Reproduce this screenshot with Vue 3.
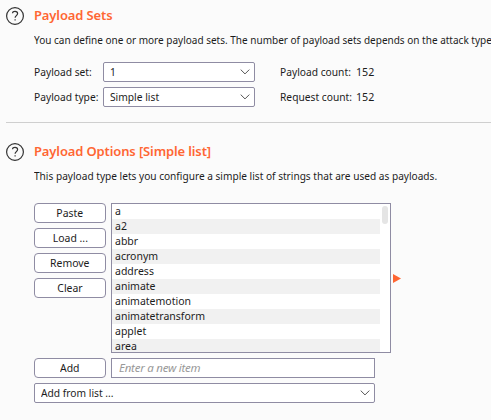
<script setup>
import { ref } from 'vue'

const items = ['a', 'a2', 'abbr', 'acronym', 'address', 'animate', 'animatemotion', 'animatetransform', 'applet', 'area']
const actions = ['Paste', 'Load ...', 'Remove', 'Clear']
const newItem = ref('')
const sets = [
  { label: 'Payload set:', value: '1', countLabel: 'Payload count:', count: 152 },
  { label: 'Payload type:', value: 'Simple list', countLabel: 'Request count:', count: 152 },
]
</script>

<template>
  <main class="panel">
    <section class="section first">
      <svg class="help" viewBox="0 0 18 18">
        <circle cx="9" cy="9" r="8.4" />
        <path d="M6.5 6.3C6.6 5 7.5 4.4 9 4.4S11.6 5.3 11.6 6.6C11.6 8.6 9.1 8.7 9.1 10.8" />
        <path d="M9.1 12.2V13.6" />
      </svg>
      <div class="body">
        <h2>Payload Sets</h2>
        <p><span class="t intro">You can define one or more payload sets. The number of payload sets depends on the attack type</span></p>
        <div class="sets">
          <div v-for="s in sets" :key="s.label" class="set-row">
            <div class="label"><span class="t">{{ s.label }}</span></div>
            <div class="select">
              <span class="t">{{ s.value }}</span>
              <svg class="chevron" viewBox="0 0 10 6"><path d="M.7 .6L5 4.9L9.3 .6" /></svg>
            </div>
            <div class="count-label"><span class="t">{{ s.countLabel }}</span></div>
            <span class="t count">{{ s.count }}</span>
          </div>
        </div>
      </div>
    </section>
    <hr />
    <section class="section second">
      <svg class="help" viewBox="0 0 18 18">
        <circle cx="9" cy="9" r="8.4" />
        <path d="M6.5 6.3C6.6 5 7.5 4.4 9 4.4S11.6 5.3 11.6 6.6C11.6 8.6 9.1 8.7 9.1 10.8" />
        <path d="M9.1 12.2V13.6" />
      </svg>
      <div class="body">
        <h2>Payload Options [Simple list]</h2>
        <p><span class="t">This payload type lets you configure a simple list of strings that are used as payloads.</span></p>
        <div class="editor">
          <div class="actions">
            <button v-for="a in actions" :key="a"><span class="t">{{ a }}</span></button>
          </div>
          <div class="list">
            <ul>
              <li v-for="i in items" :key="i"><span class="t">{{ i }}</span></li>
            </ul>
            <div class="scroll"><div class="thumb"></div></div>
          </div>
          <svg class="marker" viewBox="0 0 8 9"><path d="M0 0L8 4.5L0 9Z" /></svg>
        </div>
        <div class="add-row">
          <button><span class="t">Add</span></button>
          <input v-model="newItem" placeholder="Enter a new item" />
        </div>
        <div class="select wide">
          <span class="t">Add from list ...</span>
          <svg class="chevron" viewBox="0 0 10 6"><path d="M.7 .6L5 4.9L9.3 .6" /></svg>
        </div>
      </div>
    </section>
  </main>
</template>

<style>
body { background: #fbfbfb; overflow: hidden; }
</style>

<style scoped>
* { box-sizing: border-box; }
.panel {
  width: 491px; height: 420px; overflow: hidden; padding-left: 6px;
  background: #fbfbfb; color: #1c1c1c;
  font: 11.5px/15px "Noto Sans", sans-serif; white-space: nowrap;
}
.t { display: block; width: max-content; line-height: 15px; transform: scaleX(.89); transform-origin: 0 50%; }
.section { display: flex; }
.first { padding-top: 7px; height: 122px; }
.second { padding-top: 20px; }
.help { width: 18px; height: 18px; margin-right: 10px; flex: none; fill: none; stroke: #333; stroke-width: 1.2; }
.body { flex: none; width: 457px; margin-top: -1px; }
h2 { margin: 0; font-size: 13px; line-height: 18px; font-weight: 600; letter-spacing: -0.13px; color: #ff6633; }
p { margin: 8px 0 0; line-height: 15px; }
p .t { transform: scaleX(.879); }
p .intro { transform: scaleX(.87); }
.sets { margin-top: 15px; display: grid; gap: 5px; }
.set-row { display: flex; align-items: center; height: 20px; }
.label { width: 69px; flex: none; }
.select {
  display: flex; align-items: center; justify-content: space-between;
  width: 152px; height: 20px; padding: 0 4px 0 6px; flex: none;
  background: #fff; border: 1px solid #8f8ca3; border-radius: 2px;
}
.set-row .t, .select .t, button .t { height: 16px; }
.set-row .count { transform: scaleX(.93); }
.chevron { width: 10px; height: 6px; fill: none; stroke: #555; stroke-width: 1; }
.count-label { width: 76px; margin-left: 25px; flex: none; }
hr { margin: 0; border: 0; height: 1px; background: #cfcfcf; }
.editor { display: flex; margin-top: 20px; height: 150px; }
.actions { display: grid; gap: 5px; align-content: start; width: 72px; margin-right: 5px; }
button {
  display: flex; align-items: center; justify-content: center;
  width: 72px; height: 20px; padding: 0; font: inherit; color: inherit;
  background: #fff; border: 1px solid #8f8ca3; border-radius: 4px;
}
button .t { transform-origin: 50% 50%; transform: scaleX(.907); }
.list { display: flex; width: 280px; height: 150px; overflow: hidden; background: #fff; border: 1px solid #8f8ca3; }
ul { margin: 0; padding: 0; list-style: none; width: 268px; }
li { height: 15px; padding-left: 3px; }
li:nth-child(even) { background: #f1f1f1; }
li .t { line-height: 14px; transform: scaleX(.913); }
.scroll { padding: 2px 0 0 2px; }
.thumb { width: 6px; height: 18px; border-radius: 3px; background: #e5e5e5; }
.marker { width: 8px; height: 9px; margin: 71px 0 0 2px; fill: #ff6633; }
.add-row { display: flex; gap: 5px; margin-top: 5px; }
input {
  width: 264px; height: 20px; padding: 0 7px 2px; font: inherit; font-style: italic; letter-spacing: -0.24px;
  background: #fff; border: 1px solid #8f8ca3; border-radius: 0; outline: 0;
}
input::placeholder { color: #999; opacity: 1; }
.wide { width: 341px; margin-top: 5px; }
</style>
